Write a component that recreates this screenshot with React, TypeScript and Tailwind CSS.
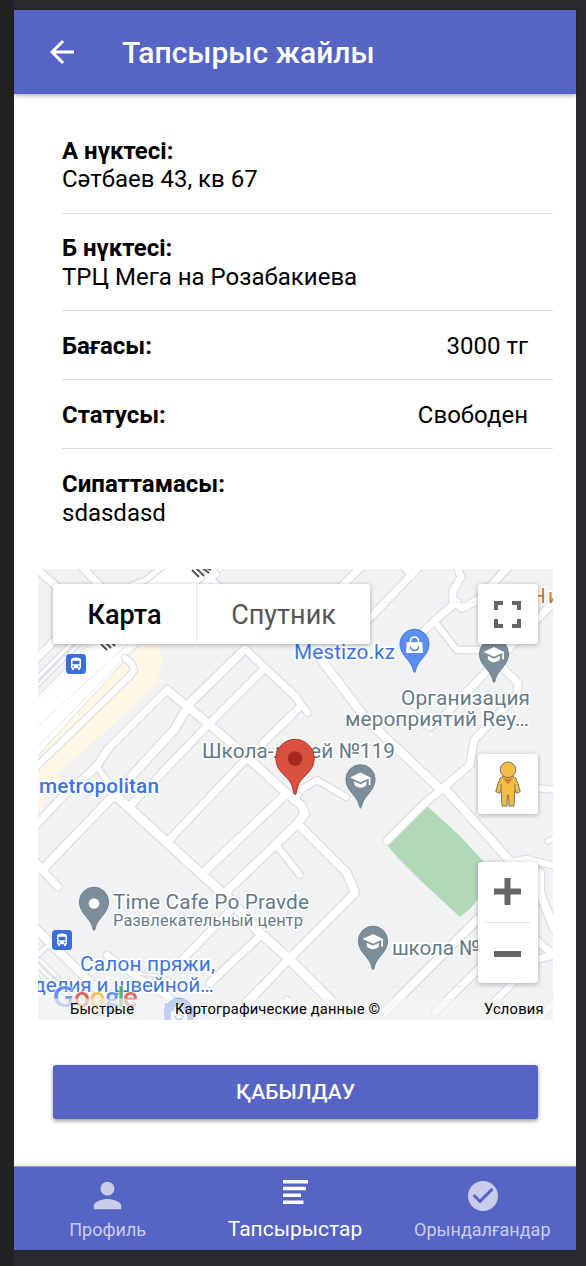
import type { ReactNode } from 'react';

const minorRoads: [string, number][] = [
  ['M36 568L56 586', 8],
  ['M80 565L104 590', 8],
  ['M118 600L132 585L146 580L163 566', 6],
  ['M172 612L216 574L206 564', 7],
  ['M207 575L224 592', 7],
  ['M34 661L60 635', 8],
  ['M36 679L72 643', 4],
  ['M36 687L80 643', 3],
  ['M36 767L129 677L134 670L132 664L125 658', 7],
  ['M167 690L210 725L247 757L283 790L302 806L305 814L297 824', 9],
  ['M167 690L108 749L96 767L64 795L36 825', 8],
  ['M96 765L116 794', 6],
  ['M245 649L190 703L174 730L116 793L42 870', 9],
  ['M263 670L210 723L130 806', 8],
  ['M245 649L297 698L301 706L263 743', 8],
  ['M290 690L308 713', 7],
  ['M300 706L286 722', 6],
  ['M247 758L167 842', 8],
  ['M293 801L302 789L317 780L346 797', 7],
  ['M284 796L203 873', 9],
  ['M304 814L297 824L226 892', 9],
  ['M277 846L300 875', 7],
  ['M297 823L347 873L355 893L290 958L228 1022', 9],
  ['M116 796L230 900L257 930L288 958L350 1020', 10],
  ['M230 911L180 962', 8],
  ['M260 936L210 983', 8],
  ['M36 862L45 873L58 887', 8],
  ['M30 923L108 1000L128 1022', 9],
  ['M34 958L52 942', 5],
  ['M36 964L78 1006', 4],
  ['M40 960L84 1004', 4],
  ['M107 955L130 972L177 1003L190 1020', 7],
  ['M131 973L162 976L180 986', 3],
  ['M287 1000L306 1020', 7],
  ['M362 566L340 588', 8],
  ['M420 566L368 620', 8],
  ['M403 566L412 576', 7],
  ['M457 566L461 577L453 591L453 601L462 608L478 600L509 566', 8],
  ['M457 602L435 620L410 645', 8],
  ['M435 622L457 650L480 650', 7],
  ['M556 600L517 640L440 720L430 727L420 722L412 713', 8],
  ['M503 668L518 683L517 695L500 713L474 740L470 765L437 793L425 803L387 841', 8],
  ['M320 658L367 720L440 789L447 791L511 862L540 873L540 893L554 928', 9],
  ['M512 862L526 859L556 866', 7],
  ['M530 935L554 955L522 963', 8],
  ['M477 920L385 1012', 9],
  ['M500 948L435 1012', 8],
  ['M518 978L488 1008', 7],
  ['M556 1000L538 1020', 7],
  ['M537 788L556 790', 7],
  ['M556 838L548 841', 6],
];

function Roads() {
  return (
    <g fill="none" strokeLinecap="round" strokeLinejoin="round">
      {minorRoads.map(([d, w], i) => (
        <path key={'c' + i} d={d} stroke="#dcdee3" strokeWidth={w + 1.5} />
      ))}
      {minorRoads.map(([d, w], i) => (
        <path key={'f' + i} d={d} stroke="#ffffff" strokeWidth={w - 1} />
      ))}
    </g>
  );
}

function Pin({ x, y, fill = '#7b8e9a', edge = '#647985', children }: { x: number; y: number; fill?: string; edge?: string; children?: ReactNode }) {
  return (
    <g transform={`translate(${x} ${y})`}>
      <path
        d="M0 43.5C-1 43.5-1.1 41-2 38.5C-4.500 31-14.600 25.500-14.600 14.800A14.600 14.600 0 0 1 14.600 14.800C14.600 25.500 4.500 31 2 38.500C1.100 41 1 43.500 0 43.500Z"
        fill={fill}
        stroke={edge}
        strokeWidth="0.9"
      />
      {children}
    </g>
  );
}

function Cap() {
  return (
    <g fill="#fff">
      <path d="M0 8L-10.500 12.900L0 17.800L8.200 14V20.500H10V12.900Z" />
      <path d="M-6.200 16.800V20C-3.500 24.200 3.500 24.200 6 20V16.800L0 19.700Z" />
    </g>
  );
}

function Bus({ x, y }: { x: number; y: number }) {
  return (
    <g transform={`translate(${x} ${y})`}>
      <rect width="20" height="20" rx="3.500" fill="#3a6fdb" />
      <path
        fill="#fff"
        fillRule="evenodd"
        d="M5 6.200Q5 3.500 10 3.500T15 6.200V14.300H14V16H12.200V14.300H7.800V16H6V14.300H5ZM6.500 6.700V10.200H13.500V6.700ZM7.300 11.500A.9 .9 0 1 0 7.300 13.300A.9 .9 0 1 0 7.300 11.500ZM12.700 11.500A.9 .9 0 1 0 12.700 13.300A.9 .9 0 1 0 12.700 11.500Z"
      />
    </g>
  );
}

function Bag() {
  return (
    <g>
      <path d="M-7.800 13.300H7.800L8.500 24H-8.500Z" fill="#fff" />
      <path d="M-4 14V12A4 4 0 0 1 4 12V14" fill="none" stroke="#fff" strokeWidth="1.700" />
      <path d="M-4 17.500A4 4 0 0 0 4 17.500" fill="none" stroke="#4a7de8" strokeWidth="1.600" />
    </g>
  );
}

type LabelProps = { x: number; y: number; w: number; size?: number; fill?: string; weight?: number; children: string };

function Label({ x, y, w, size = 20.8, fill = '#647a87', weight = 400, children }: LabelProps) {
  return (
    <text
      x={x}
      y={y}
      textLength={w}
      fontSize={size}
      fontWeight={weight}
      fill={fill}
      stroke="#fff"
      strokeWidth="3.500"
      strokeLinejoin="round"
      paintOrder="stroke"
    >
      {children}
    </text>
  );
}

function MapDrawing() {
  const blue = '#3c74e4';
  return (
    <svg className="block h-[451px] w-[515px]" viewBox="38 569 515 451">
      <rect x="38" y="569" width="515" height="451" fill="#f0f2f4" />
      <path d="M137 645H158L163 660L157 684L149 692L87 748L60 772L52 795L38 809V750Z" fill="#fef7e6" />
      <path d="M427 806L460 836L483 861V893L470 909L460 917L420 880L397 857L387 845Z" fill="#b1d8b7" />
      <path d="M160 567L92 642L34 700V760L137 647L226 567Z" fill="#fff" stroke="#dcdee3" />
      <path d="M38 699L96 641M38 726L137 636M38 747L140 642" stroke="#e1e3e7" strokeWidth="0.800" />
      <Roads />
      <path d="M38 602.500H553M38 986.500H553" stroke="#e8eaed" strokeOpacity="0.600" />
      <g stroke="#555" strokeWidth="2">
        <path d="M192 570L199 577M196 568L204 576M201 567L209 573M205 567L211 570" />
        <path d="M101 644L107 650M106 643L111 648M112 643L115 646" />
      </g>
      <Bus x={66} y={654} />
      <Bus x={52} y={930} />
      <Label x={294} y={659} w={101} fill={blue}>Mestizo.kz</Label>
      <Label x={401} y={705} w={129}>Организация</Label>
      <Label x={345} y={726} w={184}>мероприятий Rey…</Label>
      <Label x={202} y={758} w={193}>Школа-лицей №119</Label>
      <Label x={39} y={793} w={120} fill={blue} weight={500}>metropolitan</Label>
      <Label x={113} y={909} w={196}>Time Cafe Po Pravde</Label>
      <Label x={113} y={926} w={190} size={16.4}>Развлекательный центр</Label>
      <Label x={392} y={955} w={111}>школа №11</Label>
      <Label x={80} y={971} w={135} fill={blue}>Салон пряжи,</Label>
      <Label x={11} y={991.500} w={203} fill={blue}>изделия и швейной…</Label>
      <Label x={531} y={603} w={29} fill="#c7762f">Ни</Label>
      <Pin x={414.500} y={629} fill="#5c8eef" edge="#3e74df"><Bag /></Pin>
      <Pin x={494} y={639}><Cap /></Pin>
      <Pin x={360.500} y={764.500}><Cap /></Pin>
      <Pin x={373} y={926}><Cap /></Pin>
      <Pin x={94} y={887}><circle cy="16.500" r="5.300" fill="#fff" /></Pin>
      <Pin x={179} y={998} fill="#5c8eef" edge="#3e74df"><Bag /></Pin>
      <path d="M166 1003V1020" stroke="#5c8eef" strokeWidth="2.500" />
      <path
        d="M295 794.500C293.500 794.500 293.400 791 292.600 787.500C290 776 275.800 773 275.800 758.500A19.200 19.200 0 0 1 314.200 758.500C314.200 773 300 776 297.400 787.500C296.600 791 296.500 794.500 295 794.500Z"
        fill="#d9503f"
        stroke="#b73427"
      />
      <circle cx="295" cy="758.500" r="7.300" fill="#a32a20" />
      <g fontSize="28" fontWeight="700" stroke="#fff" strokeOpacity="0.700" strokeWidth="1.500" paintOrder="stroke" style={{ fontFamily: 'Lato, sans-serif' }}>
        <text y="1007" fillOpacity="0.850">
          <tspan x="53" fill="#4c82ee">G</tspan>
          <tspan x="74" fill="#dc4c3f">o</tspan>
          <tspan x="89.500" fill="#f2bb3a">o</tspan>
          <tspan x="105" fill="#4c82ee">g</tspan>
          <tspan x="117.500" fill="#4ba55a">l</tspan>
          <tspan x="123" fill="#dc4c3f">e</tspan>
        </text>
      </g>
      <rect x="38" y="998.500" width="515" height="21.500" fill="#f5f5f5" fillOpacity="0.650" />
      <g fontSize="14.700" fill="#000">
        <text x="70" y="1014" textLength="64">Быстрые</text>
        <text x="175" y="1014" textLength="205">Картографические данные ©</text>
        <text x="484" y="1014" textLength="59.500">Условия</text>
      </g>
    </svg>
  );
}

function Pegman() {
  return (
    <svg className="h-[46px] w-[28px]" viewBox="0 0 28 46">
      <g fill="#f2bc45" stroke="#7d7660" strokeWidth="1" strokeLinejoin="round">
        <path d="M6.500 16.500Q14 13 21.500 16.500Q24 22 26.300 30.500L22.500 32.500L20.800 29L20 45H15L14.500 34H13.500L13 45H8L7.200 29L5.500 32.500L1.700 30.500Q4 22 6.500 16.500Z" />
        <circle cx="14" cy="8.800" r="7.800" />
      </g>
      <path d="M8.500 16.500Q14 19 19.500 16.500L14 23.500Z" fill="#d18036" />
      <path d="M7.200 23V30M20.800 23V30" stroke="#7d7660" strokeWidth="0.900" />
    </svg>
  );
}

function Field({ label, value, inline = false, last = false }: { label: string; value: string; inline?: boolean; last?: boolean }) {
  return (
    <div
      className={
        (inline ? 'flex h-[69px] items-center justify-between pt-[2px] pr-[25px] ' : 'flex h-[97.500px] flex-col justify-center pt-[2px] ') +
        (last ? '' : 'border-b border-[#dcdcdc]')
      }
    >
      <div className="font-bold">{label}</div>
      <div>{value}</div>
    </div>
  );
}

function Tab({ label, icon, active = false }: { label: string; icon: ReactNode; active?: boolean }) {
  return (
    <div className={'flex h-full flex-1 flex-col items-center ' + (active ? 'pt-[7px] text-white' : 'pt-[8px] text-[#c9cdec]')}>
      <div className="flex h-[41px] items-start justify-center">{icon}</div>
      <div className={'whitespace-nowrap ' + (active ? 'text-[21px] leading-[28px]' : 'mt-[2px] text-[18px] leading-[24px]')}>{label}</div>
    </div>
  );
}

export default function App() {
  return (
    <div className="h-[1266px] w-[586px] bg-[linear-gradient(90deg,#222224_0,#222224_14px,#292a2e_14px)] pt-[10px] pl-[14px] font-[Roboto,'Noto_Sans',sans-serif] text-black">
      <div className="flex h-[1240px] w-[562px] flex-col bg-white">
        <header className="flex h-[84px] shrink-0 items-center bg-[#5664c5] pl-[30px] text-white shadow-[0_1px_5px_rgba(0,0,0,0.4)]">
          <svg className="h-[36px] w-[36px]" viewBox="0 0 24 24" fill="currentColor">
            <path d="M20 11H7.830l5.590-5.590L12 4l-8 8 8 8 1.410-1.410L7.830 13H20v-2z" />
          </svg>
          <h1 className="ml-[42px] text-[30px] font-medium">Тапсырыс жайлы</h1>
        </header>

        <main className="flex flex-1 flex-col">
          <section className="mt-[22px] ml-[48px] w-[491px] text-[24px] leading-[28.500px]">
            <Field label="А нүктесі:" value="Сәтбаев 43, кв 67" />
            <Field label="Б нүктесі:" value="ТРЦ Мега на Розабакиева" />
            <Field label="Бағасы:" value="3000 тг" inline />
            <Field label="Статусы:" value="Свободен" inline />
            <Field label="Сипаттамасы:" value="sdasdasd" last />
          </section>

          <section className="relative mt-[22px] ml-[24px] h-[451px] w-[515px] overflow-hidden">
            <MapDrawing />
            <div className="absolute top-[15.500px] left-[15px] flex h-[60px] w-[317px] rounded-[3px] bg-white pt-[2px] text-[27px] shadow-[0_1px_5px_rgba(0,0,0,0.3)]">
              <div className="-mt-[2px] flex w-[144px] items-center justify-center border-r border-[#e9e9e9] pt-[2px] font-medium">Карта</div>
              <div className="flex flex-1 items-center justify-center text-[#565656]">Спутник</div>
            </div>
            <div className="absolute top-[15.500px] left-[439.500px] flex h-[60px] w-[60px] items-center justify-center rounded-[3px] bg-white shadow-[0_1px_5px_rgba(0,0,0,0.3)]">
              <svg className="h-[27px] w-[27px]" viewBox="0 0 27 27" fill="none" stroke="#666" strokeWidth="4">
                <path d="M2 9V2H9M18 2H25V9M25 18V25H18M9 25H2V18" />
              </svg>
            </div>
            <div className="absolute top-[185px] left-[439.500px] flex h-[60px] w-[60px] items-center justify-center rounded-[3px] bg-white shadow-[0_1px_5px_rgba(0,0,0,0.3)]">
              <Pegman />
            </div>
            <div className="absolute top-[293px] left-[439.500px] flex h-[121px] w-[60px] flex-col items-center rounded-[3px] bg-white shadow-[0_1px_5px_rgba(0,0,0,0.3)]">
              <div className="flex h-[61px] w-[45px] items-center justify-center border-b border-[#e4e4e4]">
                <svg className="h-[27px] w-[27px]" viewBox="0 0 27 27" fill="#666">
                  <path d="M10.500 0h6v10.500H27v6H16.500V27h-6V16.500H0v-6H10.500z" />
                </svg>
              </div>
              <div className="mt-[28px] h-[6px] w-[27px] bg-[#666]" />
            </div>
          </section>

          <button className="mt-[45px] ml-[39px] h-[54px] w-[485px] rounded-[3px] bg-[#5664c5] pt-[2px] text-[21px] font-medium text-white shadow-[0_2px_4px_rgba(0,0,0,0.4)]">
            ҚАБЫЛДАУ
          </button>
        </main>

        <nav className="flex h-[84px] shrink-0 border-t border-[#8e98d4] bg-[#5664c5] shadow-[0_-1px_3px_rgba(0,0,0,0.12)]">
          <Tab
            label="Профиль"
            icon={
              <svg className="h-[41px] w-[41px]" viewBox="0 0 24 24" fill="currentColor">
                <path d="M12 12c2.210 0 4-1.790 4-4s-1.790-4-4-4-4 1.790-4 4 1.790 4 4 4zm0 2c-2.670 0-8 1.340-8 4v2h16v-2c0-2.660-5.330-4-8-4z" />
              </svg>
            }
          />
          <Tab
            active
            label="Тапсырыстар"
            icon={
              <svg className="h-[36px] w-[36px]" viewBox="0 0 36 36" fill="currentColor">
                <path d="M6 6h25v3.500H6zM6 12.800h23v3.500H6zM6 19.600h18v3.500H6zM6 26.400h20.500v3.500H6z" />
              </svg>
            }
          />
          <Tab
            label="Орындалғандар"
            icon={
              <svg className="mt-[2.500px] ml-[1px] h-[36px] w-[36px]" viewBox="0 0 24 24" fill="currentColor">
                <path d="M12 2C6.480 2 2 6.480 2 12s4.480 10 10 10 10-4.480 10-10S17.520 2 12 2zm-2 15l-5-5 1.410-1.410L10 14.170l7.590-7.590L19 8l-9 9z" />
              </svg>
            }
          />
        </nav>
      </div>
    </div>
  );
}
